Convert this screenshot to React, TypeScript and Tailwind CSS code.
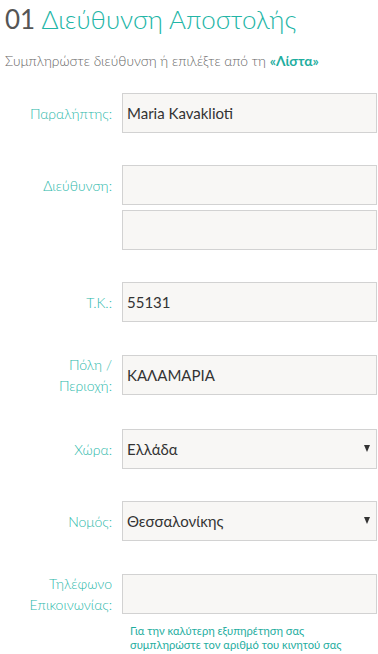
import React from "react";

const labelClass =
  "w-[112px] shrink-0 text-right text-[14px] leading-[21px] font-light text-[#2bb8aa]";
const inputClass =
  "h-[40px] w-full border border-[#d2d2d2] bg-[#f8f7f5] px-[4px] text-[15px] text-[#333] outline-none";

function Row({
  label,
  children,
  className = "",
}: {
  label: React.ReactNode;
  children: React.ReactNode;
  className?: string;
}) {
  return (
    <div className={`flex items-start gap-[10px] ${className}`}>
      <div className={`${labelClass} flex h-[40px] flex-col justify-center`}>{label}</div>
      <div className="mr-px flex flex-1 flex-col gap-[5px]">{children}</div>
    </div>
  );
}

function Select({ value }: { value: string }) {
  return (
    <div className="relative">
      <select
        defaultValue={value}
        className={`${inputClass} appearance-none`}
      >
        <option>{value}</option>
      </select>
      <span className="pointer-events-none absolute right-[7px] top-[16px] h-0 w-0 border-x-[3.5px] border-t-[7px] border-x-transparent border-t-[#333]" />
    </div>
  );
}

export default function App() {
  return (
    <div className="min-h-screen w-full bg-white font-['Lato','Open_Sans',sans-serif]">
      <div className="px-[5px] pt-[2px]">
        <h1 className="text-[26px] leading-[34px] font-light text-[#22b5a6]">
          <span className="font-normal text-[#555]">01</span> Διεύθυνση Αποστολής
        </h1>
        <p className="mt-[16px] text-[13.8px] leading-[17px] font-light text-[#666]">
          Συμπληρώστε διεύθυνση ή επιλέξτε από τη{" "}
          <span className="font-bold text-[#1fae9f]">«Λίστα»</span>
        </p>
      </div>

      <div className="mt-[24px] flex flex-col gap-[32px]">
        <Row label="Παραλήπτης:">
          <input className={inputClass} defaultValue="Maria Kavaklioti" />
        </Row>
        <Row label="Διεύθυνση:">
          <input className={inputClass} defaultValue="" />
          <input className={inputClass} defaultValue="" />
        </Row>
        <Row label="Τ.Κ.:">
          <input className={inputClass} defaultValue="55131" />
        </Row>
        <Row label={<>Πόλη /<br />Περιοχή:</>} className="mt-px">
          <input className={inputClass} defaultValue="ΚΑΛΑΜΑΡΙΑ" />
        </Row>
        <Row label="Χώρα:" className="mt-[2px]">
          <Select value="Ελλάδα" />
        </Row>
        <Row label="Νομός:">
          <Select value="Θεσσαλονίκης" />
        </Row>
        <Row label={<>Τηλέφωνο<br />Επικοινωνίας:</>} className="mt-px">
          <input className={inputClass} defaultValue="" />
        </Row>
      </div>

      <p className="ml-[130px] mt-[10px] text-[11.2px] leading-[14px] text-[#1fae9f]">
        Για την καλύτερη εξυπηρέτηση σας
        <br />
        συμπληρώστε τον αριθμό του κινητού σας
      </p>
    </div>
  );
}
